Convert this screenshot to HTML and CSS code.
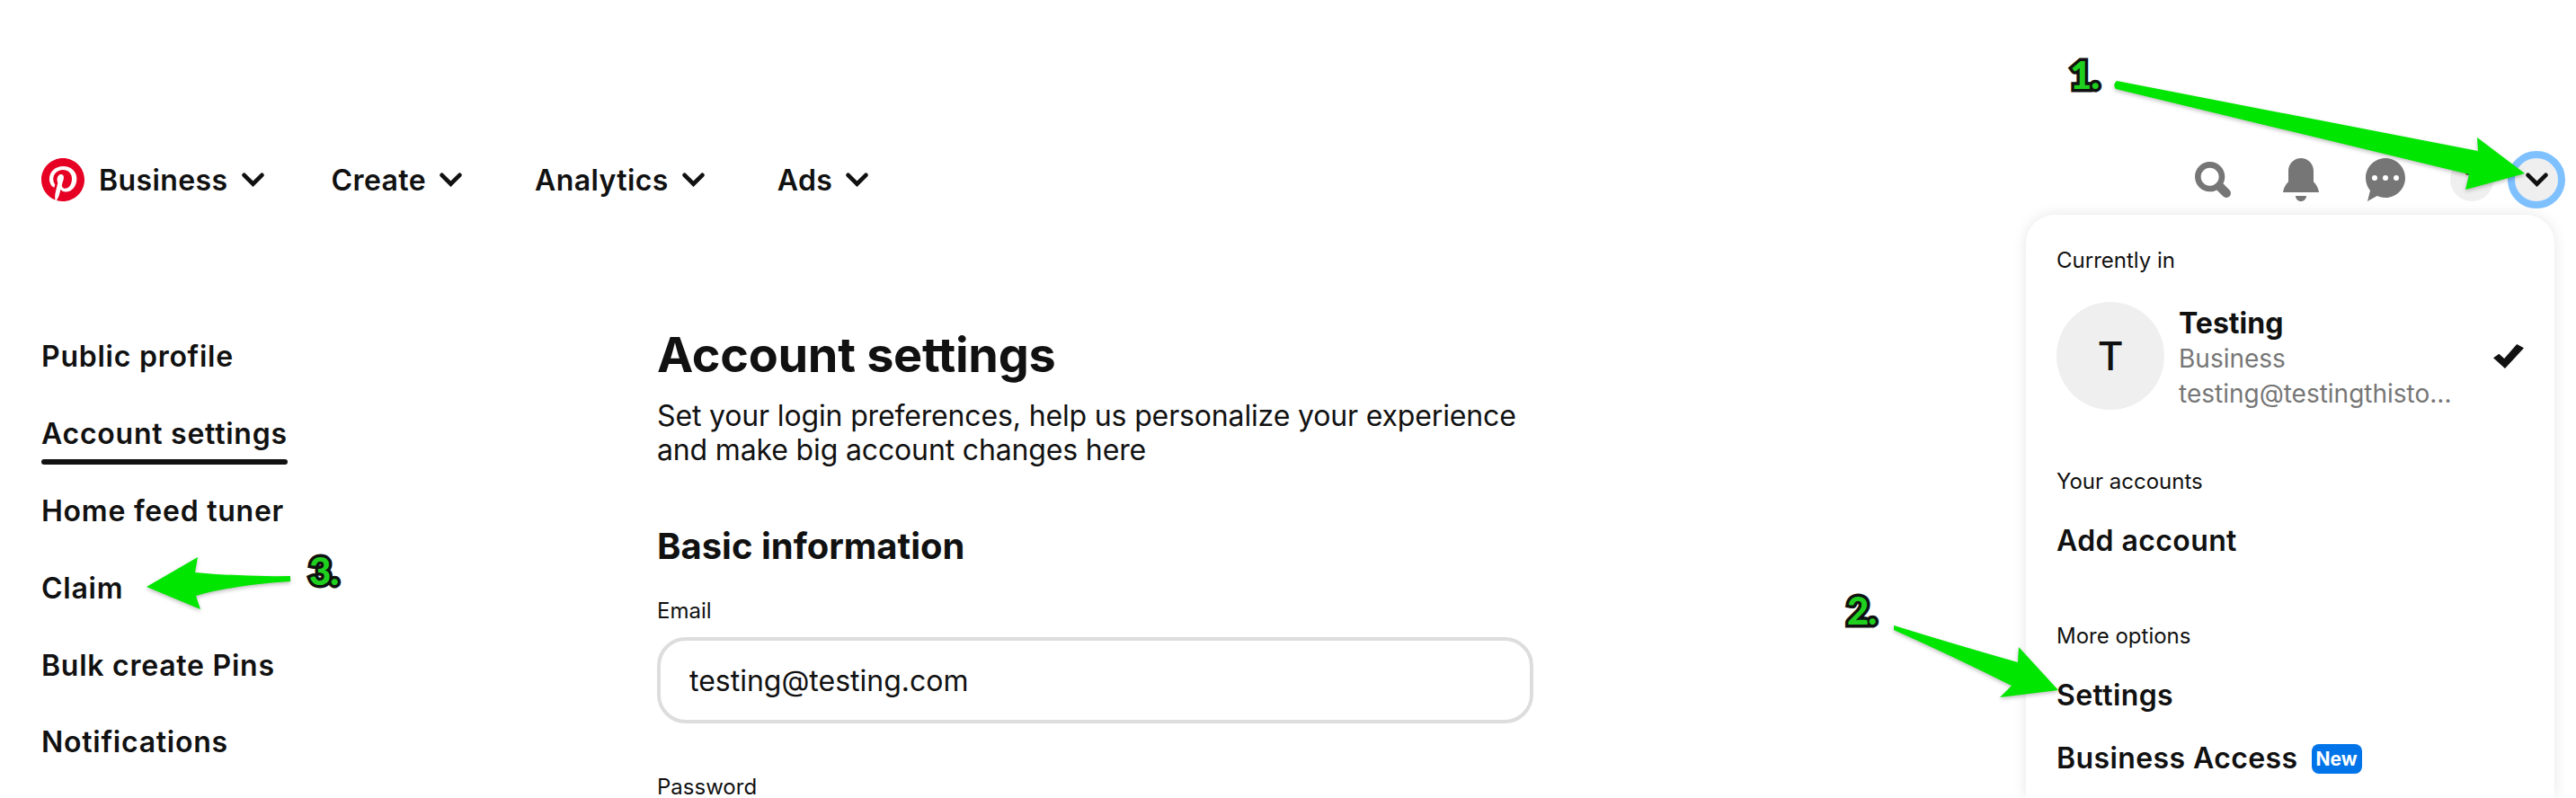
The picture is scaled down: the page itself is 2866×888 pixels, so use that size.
FILE: index.html
```html
<!DOCTYPE html>
<html lang="en">
<head>
  <meta charset="UTF-8" />
  <title>Account settings</title>
  <link rel="stylesheet" href="styles.css">
</head>
<body>

  <header class="topbar">
    <svg class="logo" viewBox="0 0 24 24"><path d="M0 12c0 5.123 3.211 9.497 7.73 11.218-.11-.937-.227-2.482.025-3.566.217-.932 1.401-5.938 1.401-5.938s-.357-.715-.357-1.774c0-1.66.962-2.9 2.161-2.9 1.02 0 1.512.765 1.512 1.682 0 1.025-.653 2.557-.99 3.978-.281 1.189.597 2.159 1.769 2.159 2.123 0 3.756-2.239 3.756-5.471 0-2.861-2.056-4.86-4.991-4.86-3.398 0-5.393 2.549-5.393 5.184 0 1.027.395 2.127.889 2.726a.36.36 0 0 1 .083.343c-.091.378-.293 1.189-.332 1.355-.053.218-.173.265-.4.159-1.492-.694-2.424-2.875-2.424-4.627 0-3.769 2.737-7.229 7.892-7.229 4.144 0 7.365 2.953 7.365 6.899 0 4.117-2.595 7.431-6.199 7.431-1.211 0-2.348-.63-2.738-1.373 0 0-.599 2.282-.744 2.84-.282 1.084-1.064 2.456-1.549 3.235C9.584 23.815 10.77 24 12 24c6.627 0 12-5.373 12-12S18.627 0 12 0 0 5.373 0 12"/></svg>
    <nav class="menu">
      <a class="menu-item brand">Business <svg class="chevron" viewBox="0 0 24 15"><polyline points="2.5,2.5 12,12 21.5,2.5"/></svg></a>
      <a class="menu-item">Create <svg class="chevron" viewBox="0 0 24 15"><polyline points="2.5,2.5 12,12 21.5,2.5"/></svg></a>
      <a class="menu-item">Analytics <svg class="chevron" viewBox="0 0 24 15"><polyline points="2.5,2.5 12,12 21.5,2.5"/></svg></a>
      <a class="menu-item">Ads <svg class="chevron" viewBox="0 0 24 15"><polyline points="2.5,2.5 12,12 21.5,2.5"/></svg></a>
    </nav>
    <div class="actions">
      <svg class="icon icon-search" viewBox="0 0 24 24"><path d="M10 16c-3.31 0-6-2.69-6-6s2.69-6 6-6 6 2.69 6 6-2.69 6-6 6m13.12 2.88l-4.26-4.26A9.842 9.842 0 0 0 20 10c0-5.52-4.48-10-10-10S0 4.48 0 10s4.48 10 10 10c1.67 0 3.24-.41 4.62-1.14l4.26 4.26a3 3 0 0 0 4.24 0 3 3 0 0 0 0-4.24"/></svg>
      <svg class="icon icon-bell" viewBox="0 0 24 24"><path d="M12 24c-1.66 0-3-1.34-3-3h6c0 1.66-1.34 3-3 3zm7-10.83c1.58 1.52 2.67 3.55 3 5.83H2c.33-2.28 1.42-4.31 3-5.83V7c0-3.87 3.13-7 7-7s7 3.13 7 7v6.17z"/></svg>
      <svg class="icon icon-chat" viewBox="0 0 24 24"><path fill-rule="evenodd" d="M18 12.5a1.5 1.5 0 1 1 .001-3.001A1.5 1.5 0 0 1 18 12.5m-6 0a1.5 1.5 0 1 1 .001-3.001A1.5 1.5 0 0 1 12 12.5m-6 0a1.5 1.5 0 1 1 .001-3.001A1.5 1.5 0 0 1 6 12.5M12 0C5.925 0 1 4.925 1 11c0 2.653.94 5.086 2.504 6.986L2 24l5.336-3.049A10.93 10.93 0 0 0 12 22c6.075 0 11-4.925 11-11S18.075 0 12 0"/></svg>
      <div class="mini-avatar">T</div>
      <div class="account-toggle"><svg class="chevron" viewBox="0 0 24 15"><polyline points="2.5,2.5 12,12 21.5,2.5"/></svg></div>
    </div>
  </header>

  <div class="page">
    <aside class="sidebar">
      <a class="side-link">Public profile</a>
      <a class="side-link active">Account settings</a>
      <a class="side-link">Home feed tuner</a>
      <a class="side-link">Claim</a>
      <a class="side-link">Bulk create Pins</a>
      <a class="side-link">Notifications</a>
    </aside>

    <main class="content">
      <h1>Account settings</h1>
      <p class="intro">Set your login preferences, help us personalize your experience<br>and make big account changes here</p>
      <h2>Basic information</h2>
      <label class="field-label">Email</label>
      <div class="field">testing@testing.com</div>
      <label class="field-label password-label">Password</label>
    </main>
  </div>

  <div class="popover">
    <div class="pop-label">Currently in</div>
    <div class="account-row">
      <div class="big-avatar">T</div>
      <div class="account-info">
        <div class="account-name">Testing</div>
        <div class="account-sub">Business</div>
        <div class="account-sub">testing@testingthisto...</div>
      </div>
      <svg class="check" viewBox="0 0 24 24" preserveAspectRatio="none"><path d="M9.17 24 0 13.5 4.5 9.6 8.6 14.3 18.5 0 24 3.8z"/></svg>
    </div>
    <div class="pop-label accounts-label">Your accounts</div>
    <div class="pop-item add-item">Add account</div>
    <div class="pop-label options-label">More options</div>
    <div class="pop-item settings-item">Settings</div>
    <div class="pop-item access-item">Business Access <span class="badge">New</span></div>
  </div>

  <!-- annotations drawn on top of the screenshot -->
  <svg class="arrows" viewBox="0 0 2866 888">
    <path d="M2355 90 L2757 168 L2756 153 L2809 193 L2743 211 L2747 194 L2354 99 Q2350 94 2355 90Z"/>
    <path d="M2107 696 Q2178 718 2245 737 L2246 720 L2290 768 L2225 776 L2238 763 Q2172 730 2107 701Z"/>
    <path d="M323 641 Q323 646 323 647 Q260 651 218 663 L223 678 L163 653 L220 620 L217 637 Q270 642 323 641Z"/>
  </svg>
  <span class="step step-one">1.</span>
  <span class="step step-two">2.</span>
  <span class="step step-three">3.</span>

</body>
</html>
```

FILE: styles.css
```css
html, body {
  margin: 0;
  height: 888px;
  overflow: hidden;
}
body {
  position: relative;
  background: #fff;
  color: #111;
  font-family: Inter, "Liberation Sans", sans-serif;
}
.topbar {
  display: flex;
  align-items: center;
  height: 64px;
  padding: 168px 12px 0 46px;
}
.logo {
  width: 48px;
  height: 48px;
  fill: #e60023;
}
.menu {
  display: flex;
  margin-left: 16px;
  gap: 81px;
}
.menu-item {
  display: flex;
  align-items: center;
  gap: 15px;
  font-size: 32px;
  font-weight: 600;
  letter-spacing: 0.4px;
}
.menu-item.brand {
  margin-right: -6px;
}
.chevron {
  width: 25px;
  height: 16px;
  fill: none;
  stroke: #111;
  stroke-width: 4.5;
  stroke-linecap: round;
}
.actions {
  display: flex;
  align-items: center;
  margin-left: auto;
}
.icon {
  fill: #767676;
}
.icon-search {
  width: 40px;
  height: 40px;
  margin-right: 54px;
}
.icon-bell {
  width: 48px;
  height: 48px;
  margin-right: 46px;
}
.icon-chat {
  width: 48px;
  height: 48px;
  margin-right: 48px;
}
.mini-avatar {
  display: flex;
  align-items: center;
  justify-content: center;
  width: 48px;
  height: 48px;
  border-radius: 50%;
  background: #efefef;
  font-size: 22px;
  font-weight: 600;
  margin-right: 16px;
}
.account-toggle {
  display: flex;
  align-items: center;
  justify-content: center;
  width: 48px;
  height: 48px;
  border: 8px solid #7fc1ff;
  border-radius: 50%;
  background: #efefef;
}
.page {
  display: grid;
  grid-template-columns: 685px 975px;
  padding: 143px 0 0 46px;
}
.sidebar {
  display: flex;
  flex-direction: column;
  padding-top: 2px;
}
.side-link {
  align-self: flex-start;
  height: 85.9px;
  line-height: 40px;
  font-size: 32px;
  font-weight: 600;
  letter-spacing: 0.75px;
}
.side-link.active::after {
  content: "";
  display: block;
  height: 6px;
  border-radius: 3px;
  background: #111;
  margin-top: 8px;
}
.content h1 {
  margin: -12px 0 0;
  font-size: 54px;
  line-height: 64px;
  font-weight: 700;
  letter-spacing: -0.3px;
}
.intro {
  margin: 17px 0 0;
  font-size: 32px;
  line-height: 38px;
  letter-spacing: -0.15px;
}
.content h2 {
  margin: 64px 0 0;
  font-size: 40px;
  line-height: 48px;
  font-weight: 700;
}
.field-label {
  display: block;
  margin-top: 33px;
  font-size: 24px;
  line-height: 30px;
}
.field {
  box-sizing: border-box;
  height: 96px;
  margin-top: 14px;
  padding: 0 32px;
  border: 4px solid #ddd;
  border-radius: 32px;
  font-size: 32px;
  line-height: 90px;
}
.password-label {
  margin-top: 56px;
}
.popover {
  position: absolute;
  left: 2254px;
  top: 239px;
  box-sizing: border-box;
  width: 588px;
  height: 649px;
  padding: 36px 34px;
  background: #fff;
  border-radius: 32px 32px 0 0;
  box-shadow: 0 0 16px rgba(0,0,0,0.1);
}
.pop-label {
  font-size: 24px;
  line-height: 30px;
}
.account-row {
  display: flex;
  align-items: center;
  height: 120px;
  margin-top: 31px;
}
.big-avatar {
  display: flex;
  align-items: center;
  justify-content: center;
  width: 120px;
  height: 120px;
  border-radius: 50%;
  background: #efefef;
  font-size: 44px;
  font-weight: 500;
}
.account-info {
  flex: 1;
  margin: 5px 0 0 16px;
}
.account-name {
  font-size: 32px;
  line-height: 41px;
  font-weight: 700;
}
.account-sub {
  font-size: 28px;
  line-height: 39px;
  color: #767676;
}
.check {
  width: 34px;
  height: 27px;
  fill: #111;
}
.accounts-label {
  margin-top: 65px;
}
.pop-item {
  font-size: 32px;
  line-height: 40px;
  font-weight: 600;
  letter-spacing: 0.4px;
}
.add-item {
  margin-top: 31px;
}
.options-label {
  margin-top: 71px;
}
.settings-item {
  margin-top: 31px;
}
.access-item {
  display: flex;
  align-items: center;
  gap: 15px;
  margin-top: 30px;
}
.badge {
  padding: 0 5px;
  height: 33px;
  line-height: 33px;
  border-radius: 8px;
  background: #0074e8;
  color: #fff;
  font-size: 21px;
  font-weight: 700;
  letter-spacing: 0;
}
.arrows {
  position: absolute;
  left: 0;
  top: 0;
  width: 2866px;
  height: 888px;
  fill: #00e600;
  filter: drop-shadow(0 2px 2px rgba(0,0,0,0.25));
}
.step {
  position: absolute;
  font-family: Lato, sans-serif;
  font-size: 42px;
  line-height: 42px;
  font-weight: 900;
  letter-spacing: -1px;
  color: #1fd01f;
  -webkit-text-stroke: 7px #111;
  paint-order: stroke fill;
}
.step-one {
  left: 2303px;
  top: 62px;
}
.step-two {
  left: 2055px;
  top: 658px;
}
.step-three {
  left: 344px;
  top: 614px;
}
```
